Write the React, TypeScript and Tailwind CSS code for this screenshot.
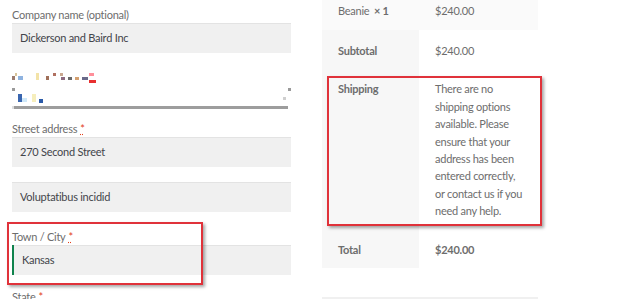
import React from "react"

const font = { fontFamily: "Lato, 'Liberation Sans', sans-serif" }

function Label({ text, required }: { text: string; required?: boolean }) {
  return (
    <div className="h-4 text-[11px] leading-4 tracking-[-0.25px] text-[#6d6d6d]">
      {text}
      {required && (
        <span className="ml-[3px] text-[#e2401c] underline decoration-dotted">*</span>
      )}
    </div>
  )
}

function Field({ value, active }: { value: string; active?: boolean }) {
  return (
    <div
      className={
        "flex h-[30px] items-center bg-[#f0f0f0] pl-[8px] text-[11px] tracking-[-0.25px] text-[#43454b] shadow-[inset_0_1px_0_#e3e3e3] " +
        (active ? "border-l-2 border-[#0f834d] pl-[6px]" : "")
      }
    >
      {value}
    </div>
  )
}

// blurred / pixelated field in the screenshot
function Mosaic() {
  const r: [number, number, number, number, string][] = [
    [0, 6, 3, 4, "#9a7b6e"],
    [3, 3, 2, 3, "#d8c49a"],
    [6, 6, 5, 4, "#8fb3e0"],
    [24, 3, 3, 7, "#f3e3a8"],
    [34, 6, 3, 4, "#a0705a"],
    [41, 3, 3, 3, "#b07060"],
    [48, 3, 3, 3, "#c9a890"],
    [49, 7, 4, 3, "#8c6a80"],
    [56, 7, 4, 3, "#6a6a6a"],
    [63, 7, 4, 3, "#d4a070"],
    [70, 7, 6, 3, "#6a6a8a"],
    [77, 3, 5, 3, "#ff8f9a"],
    [77, 10, 7, 3, "#e83030"],
    [0, 18, 3, 3, "#9a9a9a"],
    [6, 24, 4, 8, "#3a66b0"],
    [10, 28, 5, 4, "#cfe8f8"],
    [20, 24, 4, 8, "#f6eebc"],
    [27, 29, 4, 4, "#2a5aa8"],
    [276, 18, 3, 3, "#9a9a9a"],
    [271, 27, 3, 3, "#cfcfcf"],
    [2, 36, 274, 3, "#9d9d9d"],
    [0, 36, 2, 3, "#e0e0e0"],
  ]
  return (
    <svg width="279" height="40" viewBox="0 0 279 40">
      {r.map(([x, y, w, h, c], i) => (
        <rect key={i} x={x} y={y} width={w} height={h} fill={c} />
      ))}
    </svg>
  )
}

const shippingLines = [
  "There are no",
  "shipping options",
  "available. Please",
  "ensure that your",
  "address has been",
  "entered correctly,",
  "or contact us if you",
  "need any help.",
]

export default function App() {
  return (
    <div className="relative h-[299px] w-[624px] overflow-hidden bg-white" style={font}>
      <div className="flex">
        {/* Billing form */}
        <div className="ml-[12px] flex w-[279px] shrink-0 flex-col pt-[7px]">
          <Label text="Company name (optional)" />
          <Field value="Dickerson and Baird Inc" />
          <div className="mt-[17px]">
            <Mosaic />
          </div>
          <div className="mt-[11px]">
            <Label text="Street address" required />
          </div>
          <Field value="270 Second Street" />
          <div className="mt-[15px]">
            <Field value="Voluptatibus incidid" />
          </div>
          <div className="mt-[17px]">
            <Label text="Town / City" required />
          </div>
          <Field value="Kansas" active />
          <div className="mt-[14px]">
            <Label text="State" required />
          </div>
        </div>

        {/* Order review */}
        <div className="ml-[31px] flex w-[216px] shrink-0 flex-col text-[11px] leading-[17.4px] tracking-[-0.25px] text-[#6d6d6d]">
          <div className="flex h-[30px] bg-[#fafafa] pt-[2px]">
            <div className="w-[97px] shrink-0 pl-[16px]">
              Beanie <span className="ml-[2px] font-bold">× 1</span>
            </div>
            <div className="pl-[16px]">$240.00</div>
          </div>
          <div className="flex">
            <div className="w-[97px] shrink-0 bg-[#f7f7f7] pb-[10px] pl-[16px] pt-[12px] font-bold">Subtotal</div>
            <div className="pb-[10px] pl-[16px] pt-[12px]">$240.00</div>
          </div>
          <div className="flex">
            <div className="w-[97px] shrink-0 bg-[#f7f7f7] pb-[10px] pl-[16px] pt-[11px] font-bold">Shipping</div>
            <div className="pb-[10px] pl-[16px] pt-[11px]">
              {shippingLines.map((l) => (
                <div key={l} className="whitespace-nowrap">{l}</div>
              ))}
            </div>
          </div>
          <div className="flex">
            <div className="w-[97px] shrink-0 bg-[#f7f7f7] pb-[10px] pl-[16px] pt-[11px] font-bold">Total</div>
            <div className="pb-[10px] pl-[16px] pt-[11px] font-bold">$240.00</div>
          </div>
          <div className="mt-[29px] h-[4px] bg-[#f0f0f0]" />
        </div>
      </div>

      {/* annotation boxes */}
      <div className="absolute left-[7px] top-[222px] h-[63px] w-[196px] border-2 border-[#e0323a] shadow-[2px_2px_3px_rgba(0,0,0,0.35)]" />
      <div className="absolute left-[327px] top-[76px] h-[150px] w-[215px] border-2 border-[#e0323a] shadow-[2px_2px_3px_rgba(0,0,0,0.35)]" />
    </div>
  )
}
